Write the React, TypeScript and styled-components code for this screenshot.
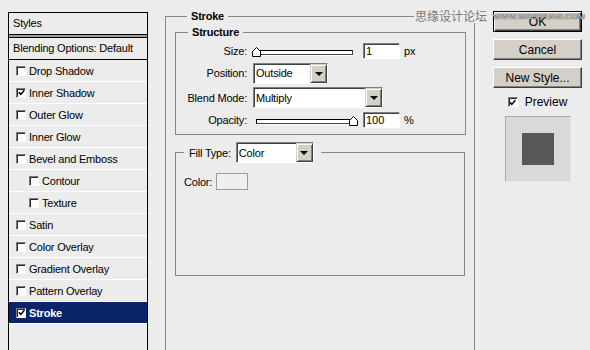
import styled, { createGlobalStyle, css } from "styled-components";

const GlobalStyle = createGlobalStyle`
  html, body {
    margin: 0;
    padding: 0;
    background: #ececec;
  }
  body {
    font-family: "Liberation Sans", Arial, sans-serif;
    font-size: 11px;
    letter-spacing: -0.2px;
    color: #000;
  }
`;

const Dialog = styled.div`
  position: relative;
  width: 590px;
  height: 350px;
  overflow: hidden;
  display: flex;
  align-items: flex-start;
`;

/* ---------- left styles list ---------- */

const StylesPanel = styled.div`
  flex-shrink: 0;
  margin: 12px 0 0 8px;
  width: 140px;
  height: 350px;
  box-sizing: border-box;
  border: 1px solid #000;
  border-bottom: none;
`;

const PanelHeader = styled.div`
  height: 21px;
  line-height: 21px;
  padding-left: 4px;
  border-bottom: 1px solid #000;
`;

const HeaderRule = styled.div`
  height: 2px;
  background: #9c9c9c;
  border-bottom: 1px solid #000;
`;

const BlendingRow = styled.div`
  height: 21px;
  line-height: 21px;
  padding-left: 4px;
  border-bottom: 1px solid #000;
`;

const StyleRow = styled.div<{ $indent?: boolean; $selected?: boolean }>`
  display: flex;
  align-items: center;
  gap: 3px;
  height: 21px;
  padding-left: ${(p) => (p.$indent ? 20 : 7)}px;
  border-bottom: 1px solid #fff;
  background: ${(p) => (p.$selected ? "#0a246a" : "transparent")};
  color: ${(p) => (p.$selected ? "#fff" : "#000")};
  font-weight: ${(p) => (p.$selected ? "bold" : "normal")};
`;

const CheckBox = styled.span`
  flex-shrink: 0;
  width: 10px;
  height: 10px;
  box-sizing: border-box;
  display: flex;
  align-items: center;
  justify-content: center;
  background: #fff;
  border: 1px solid;
  border-color: #7b7b7b #fff #fff #7b7b7b;
  box-shadow: inset 1px 1px 0 #2a2a2a;
`;

const Check = ({ checked }: { checked?: boolean }) => (
  <CheckBox>
    {checked && (
      <svg width="7" height="7" viewBox="0 0 7 7">
        <path d="M0.8 3.2 L2.8 5.4 L6.3 1.2" fill="none" stroke="#000" strokeWidth="1.6" />
      </svg>
    )}
  </CheckBox>
);

/* ---------- group boxes ---------- */

const Group = styled.fieldset`
  margin: 0;
  padding: 0;
  min-width: 0;
  box-sizing: border-box;
  border: 1px solid #878787;
`;

const Legend = styled.legend<{ $bold?: boolean }>`
  margin-left: 12px;
  padding: 0 4px;
  line-height: 13px;
  font-weight: ${(p) => (p.$bold ? "bold" : "normal")};
`;

const StrokeGroup = styled(Group)`
  flex-shrink: 0;
  margin: 10px 0 0 17px;
  width: 310px;
  height: 360px;
  padding: 3px 8px 0 9px;
`;

const StructureGroup = styled(Group)`
  width: 291px;
  padding: 3px 0 6px;
`;

const FormGrid = styled.div`
  display: grid;
  grid-template-columns: 71px auto;
  grid-template-rows: 18px 22px 23px 17px;
  column-gap: 6px;
  row-gap: 2px;
  align-items: center;
`;

const FieldLabel = styled.span`
  text-align: right;
`;

const FieldControl = styled.div`
  display: flex;
  align-items: center;
`;

const SliderBox = styled.div`
  position: relative;
  width: 104px;
  height: 12px;
  margin-right: 6px;
`;

const SliderTrack = styled.div`
  position: absolute;
  left: 3px;
  right: 4px;
  top: 5px;
  height: 5px;
  box-sizing: border-box;
  background: #fff;
  border: 1px solid;
  border-color: #000 #404040 #404040 #000;
  box-shadow: 0 1px 0 #fff;
`;

const SliderThumb = styled.svg`
  position: absolute;
  top: 2px;
`;

const Slider = ({ value, max }: { value: number; max: number }) => {
  const center = 3 + (value / max) * 97;
  return (
    <SliderBox>
      <SliderTrack />
      <SliderThumb width="9" height="10" viewBox="0 0 9 10" style={{ left: center - 4.5 }}>
        <path d="M0.5 9.5 V4.5 L4.5 0.5 L8.5 4.5 V9.5 Z" fill="#fff" stroke="#000" />
      </SliderThumb>
    </SliderBox>
  );
};

const NumberField = styled.input`
  width: 37px;
  height: 16px;
  box-sizing: border-box;
  margin: 0;
  padding: 0 2px;
  font: inherit;
  color: #000;
  background: #fff;
  border: 1px solid;
  border-color: #808080 #fff #fff #808080;
  box-shadow: inset 1px 1px 0 #404040;
  outline: none;
`;

const Unit = styled.span`
  margin-left: 4px;
`;

const SelectBox = styled.div<{ $width: number }>`
  width: ${(p) => p.$width}px;
  height: 21px;
  box-sizing: border-box;
  display: flex;
  align-items: center;
  justify-content: space-between;
  padding-left: 2px;
  background: #fff;
  border: 1px solid;
  border-color: #808080 #fff #fff #808080;
  box-shadow: inset 1px 1px 0 #404040;
`;

const SelectArrow = styled.span`
  width: 17px;
  height: 19px;
  box-sizing: border-box;
  display: flex;
  align-items: center;
  justify-content: center;
  background: #d4d0c8;
  border: 1px solid;
  border-color: #d4d0c8 #404040 #404040 #d4d0c8;
  box-shadow: inset 1px 1px 0 #fff, inset -1px -1px 0 #808080;

  &::after {
    content: "";
    border-left: 4px solid transparent;
    border-right: 4px solid transparent;
    border-top: 4px solid #000;
    margin-top: 1px;
  }
`;

const Select = ({ value, width }: { value: string; width: number }) => (
  <SelectBox $width={width}>
    <span>{value}</span>
    <SelectArrow />
  </SelectBox>
);

const FillGroup = styled(Group)`
  margin-top: 7px;
  width: 290px;
  height: 134px;
  padding: 0;
`;

const FillLegend = styled.legend`
  display: flex;
  align-items: center;
  gap: 5px;
  margin-left: 8px;
  padding: 0 7px 0 5px;
`;

const FillBody = styled.div`
  display: flex;
  align-items: center;
  gap: 4px;
  padding: 10px 0 0 8px;
`;

const Swatch = styled.span`
  width: 32px;
  height: 17px;
  box-sizing: border-box;
  background: #efefef;
  border: 1px solid #9c9c9c;
`;

/* ---------- right buttons ---------- */

const ButtonColumn = styled.div`
  position: relative;
  flex-shrink: 0;
  margin: 11px 0 0 18px;
  width: 89px;
  display: flex;
  flex-direction: column;
  align-items: center;
  gap: 7px;
`;

const DialogButton = styled.button<{ $default?: boolean }>`
  width: 89px;
  height: 21px;
  box-sizing: border-box;
  margin: 0;
  padding: 0;
  font-family: inherit;
  font-size: 12px;
  letter-spacing: 0;
  color: #000;
  background: #d4d0c8;
  border: 1px solid;
  border-color: #fff #404040 #404040 #fff;
  box-shadow: inset -1px -1px 0 #808080;
  ${(p) =>
    p.$default &&
    css`
      border-color: #000;
      box-shadow: inset 1px 1px 0 #fff, inset -1px -1px 0 #404040, inset -2px -2px 0 #808080;
    `}
`;

const PreviewRow = styled.label`
  display: flex;
  align-items: center;
  gap: 7px;
  height: 14px;
  font-size: 12px;
  letter-spacing: 0;
`;

const PreviewBox = styled.div`
  width: 66px;
  height: 66px;
  box-sizing: border-box;
  display: flex;
  align-items: center;
  justify-content: center;
  background: #d9d9d9;
  border: 1px solid;
  border-color: #a9a9a9 #e6e6e6 #e6e6e6 #a9a9a9;
`;

const PreviewSwatch = styled.div`
  width: 32px;
  height: 32px;
  background: #575757;
`;

/* ---------- watermarks ---------- */

const SiteMark = styled.span`
  position: absolute;
  top: 0;
  left: 0;
  width: 89px;
  margin-top: 2px;
  text-align: center;
  font-size: 8px;
  line-height: 8px;
  letter-spacing: 0.3px;
  color: #f4f4f4;
  text-shadow: 0 0 1px #000, 0 0 1px #000;
  pointer-events: none;
`;

const ForumMark = styled.span`
  position: absolute;
  top: 9px;
  left: 414px;
  padding: 0 1px;
  background: #ececec;
  font-family: "Noto Sans CJK SC", sans-serif;
  font-size: 12px;
  line-height: 14px;
  letter-spacing: 0;
  color: #7a7a7a;
`;

const styleItems: { name: string; checked?: boolean; indent?: boolean; selected?: boolean }[] = [
  { name: "Drop Shadow" },
  { name: "Inner Shadow", checked: true },
  { name: "Outer Glow" },
  { name: "Inner Glow" },
  { name: "Bevel and Emboss" },
  { name: "Contour", indent: true },
  { name: "Texture", indent: true },
  { name: "Satin" },
  { name: "Color Overlay" },
  { name: "Gradient Overlay" },
  { name: "Pattern Overlay" },
  { name: "Stroke", checked: true, selected: true },
];

export default function App() {
  return (
    <Dialog>
      <GlobalStyle />
      <StylesPanel>
        <PanelHeader>Styles</PanelHeader>
        <HeaderRule />
        <BlendingRow>Blending Options: Default</BlendingRow>
        {styleItems.map((item) => (
          <StyleRow key={item.name} $indent={item.indent} $selected={item.selected}>
            <Check checked={item.checked} />
            <span>{item.name}</span>
          </StyleRow>
        ))}
      </StylesPanel>

      <StrokeGroup>
        <Legend $bold>Stroke</Legend>
        <StructureGroup>
          <Legend $bold>Structure</Legend>
          <FormGrid>
            <FieldLabel>Size:</FieldLabel>
            <FieldControl>
              <Slider value={1} max={250} />
              <NumberField readOnly value="1" />
              <Unit>px</Unit>
            </FieldControl>
            <FieldLabel>Position:</FieldLabel>
            <FieldControl>
              <Select value="Outside" width={75} />
            </FieldControl>
            <FieldLabel>Blend Mode:</FieldLabel>
            <FieldControl>
              <Select value="Multiply" width={130} />
            </FieldControl>
            <FieldLabel>Opacity:</FieldLabel>
            <FieldControl>
              <Slider value={100} max={100} />
              <NumberField readOnly value="100" />
              <Unit>%</Unit>
            </FieldControl>
          </FormGrid>
        </StructureGroup>

        <FillGroup>
          <FillLegend>
            <span>Fill Type:</span>
            <Select value="Color" width={78} />
          </FillLegend>
          <FillBody>
            <span>Color:</span>
            <Swatch />
          </FillBody>
        </FillGroup>
      </StrokeGroup>

      <ButtonColumn>
        <DialogButton $default>OK</DialogButton>
        <DialogButton>Cancel</DialogButton>
        <DialogButton>New Style...</DialogButton>
        <PreviewRow>
          <Check checked />
          <span>Preview</span>
        </PreviewRow>
        <PreviewBox>
          <PreviewSwatch />
        </PreviewBox>
        <SiteMark>WWW.MISSYUAN.COM</SiteMark>
      </ButtonColumn>

      <ForumMark>思缘设计论坛</ForumMark>
    </Dialog>
  );
}
